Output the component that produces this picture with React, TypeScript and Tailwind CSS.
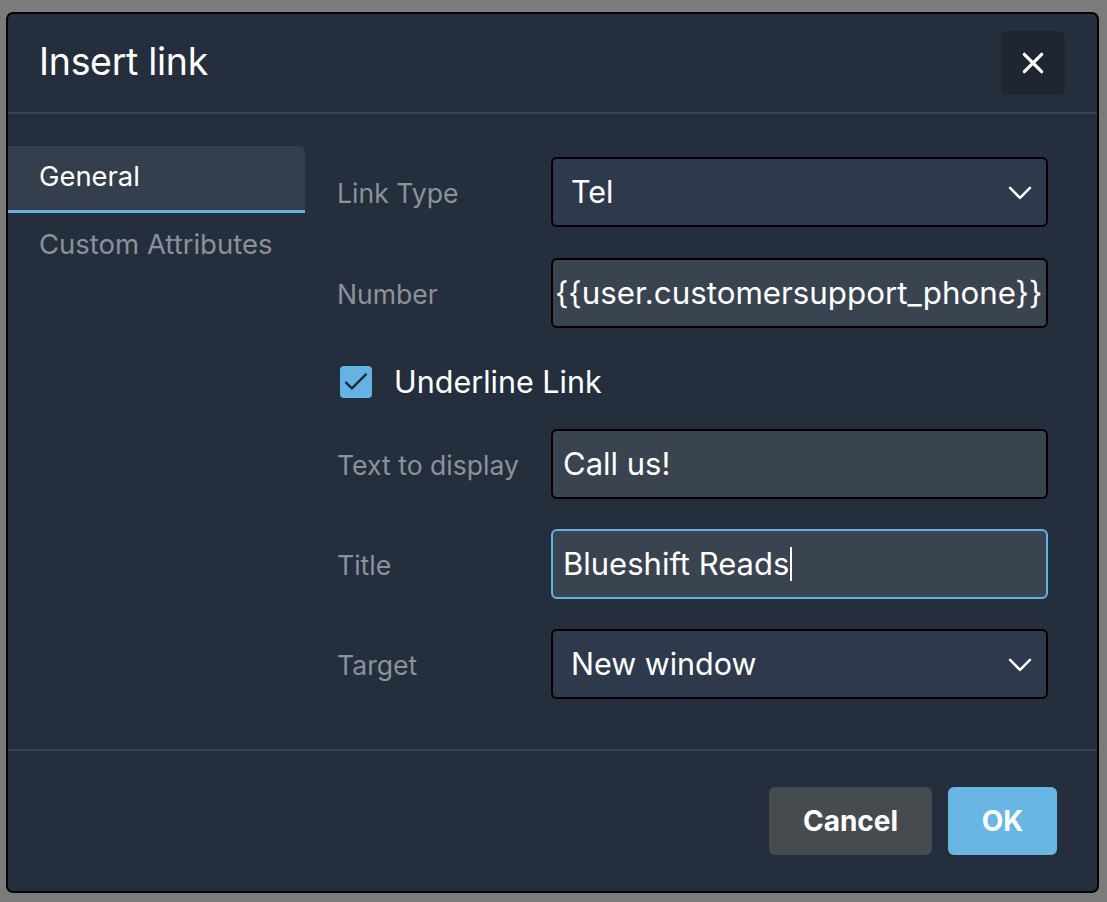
import React from "react";

const font = { fontFamily: "Inter, 'Noto Sans', sans-serif" };

function Chevron() {
  return (
    <svg width="28" height="28" viewBox="0 0 24 24" fill="none" stroke="white" strokeWidth="2.2" strokeLinecap="round" strokeLinejoin="round">
      <path d="M3.5 8.5l8.5 8.5 8.5-8.5" />
    </svg>
  );
}

export default function App() {
  return (
    <div className="w-[1107px] h-[902px] bg-[#7b7b7b] pt-[12px] pl-[6px]" style={font}>
      <div className="w-[1093px] h-[881px] bg-[#252e3d] border-2 border-black rounded-[7px] flex flex-col">
        {/* header */}
        <div className="h-[100px] flex items-center justify-between pl-[31px] pr-[32px] border-b-2 border-[#3a4453] shrink-0">
          <h1 className="text-[37.5px] text-white tracking-[-0.3px] leading-none pb-[2px]">Insert link</h1>
          <button className="w-[64px] h-[64px] rounded-[6px] bg-[#1f2631] flex items-center justify-center">
            <svg width="26" height="26" viewBox="0 0 24 24" fill="none" stroke="white" strokeWidth="3" strokeLinecap="round">
              <path d="M4 4l16 16M20 4L4 20" />
            </svg>
          </button>
        </div>
        {/* body */}
        <div className="flex flex-1">
          <div className="w-[297px] pt-[32px] shrink-0">
            <div className="h-[67px] bg-[#343e4c] rounded-tr-[6px] border-b-[3px] border-[#64b3e4] flex items-center pl-[31px] text-[27.4px] text-white pb-[3px]">
              General
            </div>
            <div className="h-[64px] flex items-center pl-[31px] text-[27.5px] text-[#8a919b]">
              Custom Attributes
            </div>
          </div>
          <div className="flex-1 pl-[32px] pt-[43px] flex flex-col">
            <div className="flex items-center h-[70px]">
              <div className="w-[214px] text-[26.6px] text-[#8b929b] pt-[3px]">Link Type</div>
              <div className="w-[497px] h-[70px] rounded-[6px] border-2 border-black bg-[#2e3a4c] flex items-center justify-between pl-[18px] pr-[12px]">
                <span className="text-[30.5px] text-white">Tel</span>
                <Chevron />
              </div>
            </div>
            <div className="flex items-center h-[70px] mt-[31px]">
              <div className="w-[214px] text-[26.6px] text-[#8b929b] pt-[3px]">Number</div>
              <div className="w-[497px] h-[70px] rounded-[6px] border-2 border-black bg-[#3a4350] flex items-center pl-[2px] overflow-hidden">
                <span className="text-[31.3px] text-white whitespace-nowrap">{"{{user.customersupport_phone}}"}</span>
              </div>
            </div>
            <div className="flex items-center h-[32px] mt-[38px] pl-[3px]">
              <div className="w-[32px] h-[32px] rounded-[4px] bg-[#64b3e4] flex items-center justify-center shrink-0">
                <svg width="28" height="28" viewBox="0 0 24 24" fill="none" stroke="#1f2733" strokeWidth="2" strokeLinecap="round" strokeLinejoin="round" className="shrink-0">
                  <path d="M3.5 12.5l5 5L20.5 5.5" />
                </svg>
              </div>
              <span className="ml-[22px] text-[30.5px] text-white">Underline Link</span>
            </div>
            <div className="flex items-center h-[70px] mt-[31px]">
              <div className="w-[214px] text-[26.6px] text-[#8b929b] pt-[3px]">Text to display</div>
              <div className="w-[497px] h-[70px] rounded-[6px] border-2 border-black bg-[#3a4350] flex items-center pl-[10px]">
                <span className="text-[31px] text-white">Call us!</span>
              </div>
            </div>
            <div className="flex items-center h-[70px] mt-[30px]">
              <div className="w-[214px] text-[26.6px] text-[#8b929b] pt-[3px]">Title</div>
              <div className="w-[497px] h-[70px] rounded-[6px] border-2 border-[#64b3e4] bg-[#3a4350] flex items-center pl-[10px]">
                <span className="text-[31px] text-white">Blueshift Reads</span>
                <span className="w-[1.5px] h-[34px] bg-white ml-[1px]" />
              </div>
            </div>
            <div className="flex items-center h-[70px] mt-[30px]">
              <div className="w-[214px] text-[26.6px] text-[#8b929b] pt-[3px]">Target</div>
              <div className="w-[497px] h-[70px] rounded-[6px] border-2 border-black bg-[#2e3a4c] flex items-center justify-between pl-[18px] pr-[12px]">
                <span className="text-[30.5px] text-white">New window</span>
                <Chevron />
              </div>
            </div>
          </div>
        </div>
        {/* footer */}
        <div className="h-[142px] border-t-2 border-[#3a4453] flex items-center justify-end gap-[16px] pr-[40px] shrink-0">
          <button className="w-[163px] h-[68px] rounded-[6px] bg-[#464b50] text-white font-bold text-[28px]">Cancel</button>
          <button className="w-[109px] h-[68px] rounded-[6px] bg-[#69b6e5] text-white font-bold text-[28px]">OK</button>
        </div>
      </div>
    </div>
  );
}
